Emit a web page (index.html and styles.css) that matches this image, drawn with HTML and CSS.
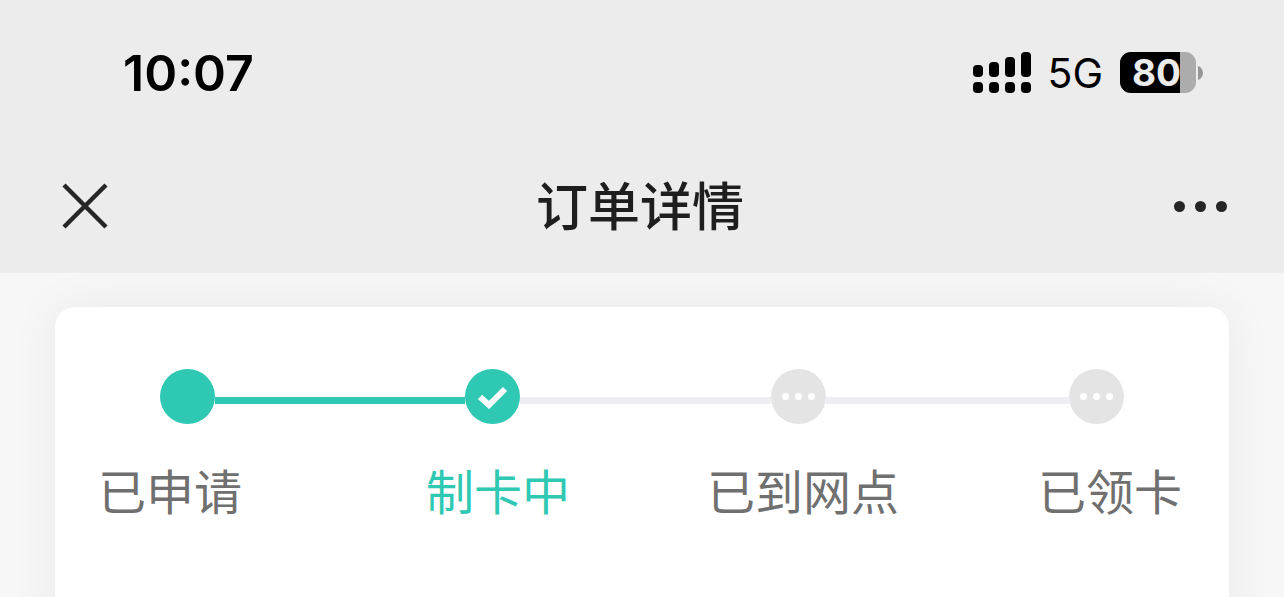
FILE: index.html
```html
<!DOCTYPE html>
<html lang="zh">

<head>
  <meta charset="UTF-8">
  <meta name="viewport" content="width=device-width, initial-scale=1.0">
  <title>订单详情</title>
  <link rel="stylesheet" href="styles.css">
</head>

<body>
  <div class="header">
    <div class="status_bar">
      <div class="time">10:07</div>
      <div class="status_right">
        <svg class="signal" width="58" height="42" viewBox="0 0 58 42">
          <rect x="0" y="13" width="10" height="12" rx="4" />
          <rect x="16" y="10" width="10" height="15" rx="4" />
          <rect x="32" y="5" width="10" height="20" rx="4" />
          <rect x="48" y="0" width="10" height="25" rx="4" />
          <rect x="0" y="30" width="10" height="11" rx="4" />
          <rect x="16" y="30" width="10" height="11" rx="4" />
          <rect x="32" y="30" width="10" height="11" rx="4" />
          <rect x="48" y="30" width="10" height="11" rx="4" />
        </svg>
        <div class="network">5G</div>
        <div class="battery">
          <div class="battery_body">
            <div class="battery_level">80</div>
          </div>
          <svg class="battery_cap" width="5" height="14" viewBox="0 0 5 14">
            <path d="M0 0 C3 1 5 4 5 7 C5 10 3 13 0 14 Z" />
          </svg>
        </div>
      </div>
    </div>
    <div class="nav_bar">
      <svg class="close_icon" width="46" height="46" viewBox="0 0 46 46">
        <path d="M2 2 L44 44 M44 2 L2 44" />
      </svg>
      <div class="nav_title">订单详情</div>
      <div class="more_icon">
        <span></span>
        <span></span>
        <span></span>
      </div>
    </div>
  </div>

  <div class="content">
    <div class="card">
      <div class="steps">
        <div class="dot dot_on"></div>
        <div class="line line_on line_a"></div>
        <div class="dot dot_on">
          <svg width="32" height="24" viewBox="0 0 32 24">
            <path d="M3 12 L12 20 L28 4" />
          </svg>
        </div>
        <div class="line line_b"></div>
        <div class="dot dot_off"><span></span><span></span><span></span></div>
        <div class="line line_c"></div>
        <div class="dot dot_off"><span></span><span></span><span></span></div>
      </div>
      <div class="labels">
        <div class="label">已申请</div>
        <div class="label label_on">制卡中</div>
        <div class="label">已到网点</div>
        <div class="label">已领卡</div>
      </div>
    </div>
  </div>
</body>

</html>
```
FILE: styles.css
```css
* {
  box-sizing: border-box;
  margin: 0;
  padding: 0;
}

html,
body {
  height: 597px;
  overflow: hidden;
}

body {
  background-color: rgb(247, 247, 247);
  font-family: "Noto Sans CJK SC", "Noto Sans", sans-serif;
}

.header {
  height: 273px;
  background-color: rgb(236, 236, 236);
}

.status_bar {
  height: 145px;
  padding: 0 81px 0 123px;

  display: flex;
  justify-content: space-between;
  align-items: center;
}

.time {
  font-family: Inter, sans-serif;
  font-size: 50px;
  font-weight: 600;
  color: rgb(0, 0, 0);
}

.status_right {
  display: flex;
  align-items: center;
}

.signal {
  fill: rgb(0, 0, 0);
  margin-right: 16px;
}

.network {
  font-family: Inter, sans-serif;
  font-size: 41px;
  color: rgb(0, 0, 0);
  margin-right: 17px;
}

.battery {
  display: flex;
  align-items: center;
}

.battery_body {
  width: 76px;
  height: 41px;
  border-radius: 11px;
  background-color: rgb(172, 172, 172);
}

.battery_level {
  width: 60px;
  height: 41px;
  padding-left: 12px;
  border-radius: 11px 0 0 11px;

  font-family: Inter, sans-serif;
  font-size: 37px;
  font-weight: 700;
  line-height: 41px;
  white-space: nowrap;

  color: rgb(236, 236, 236);
  background-color: rgb(0, 0, 0);
}

.battery_cap {
  margin-left: 2px;
  fill: rgb(150, 150, 150);
}

.nav_bar {
  height: 128px;
  padding: 0 57px 6px 62px;

  display: flex;
  justify-content: space-between;
  align-items: center;
}

.close_icon {
  fill: none;
  stroke: rgb(38, 38, 38);
  stroke-width: 4.5;
}

.nav_title {
  font-size: 52px;
  font-weight: 500;
  color: rgb(30, 30, 30);
  margin-bottom: 6px;
  margin-left: -2px;
}

.more_icon {
  width: 53px;

  display: flex;
  justify-content: space-between;
}

.more_icon span {
  width: 11px;
  height: 11px;
  border-radius: 50%;
  background-color: rgb(38, 38, 38);
}

.content {
  padding: 34px 55px 0;
}

.card {
  height: 420px;
  padding-top: 62px;

  border-radius: 20px;
  background-color: white;
  box-shadow: 0 0 50px rgba(0, 0, 0, 0.06);
}

.steps {
  display: flex;
  align-items: center;
  padding-left: 105px;
}

.dot {
  width: 55px;
  height: 55px;
  flex-shrink: 0;
  border-radius: 50%;

  display: flex;
  justify-content: center;
  align-items: center;
  gap: 6px;
}

.dot_on {
  background-color: rgb(47, 200, 179);
}

.dot_on svg {
  fill: none;
  stroke: white;
  stroke-width: 6;
}

.dot_off {
  background-color: rgb(228, 228, 228);
}

.dot_off span {
  width: 7px;
  height: 7px;
  border-radius: 50%;
  background-color: white;
}

.line {
  height: 7px;
  margin-top: 7px;
  background-color: rgb(237, 237, 242);
}

.line_on {
  background-color: rgb(47, 200, 179);
}

.line_a {
  width: 250px;
}

.line_b {
  width: 251px;
}

.line_c {
  width: 243px;
}

.labels {
  display: flex;
  margin-top: 31px;
  padding-left: 43px;
}

.label {
  font-size: 48px;
  line-height: 68px;
  white-space: nowrap;
  flex-shrink: 0;
  color: rgb(112, 112, 112);
  margin-right: 139px;
}

.label:first-child {
  margin-right: 184px;
}

.label_on {
  color: rgb(47, 200, 179);
  margin-right: 137px;
}
```
